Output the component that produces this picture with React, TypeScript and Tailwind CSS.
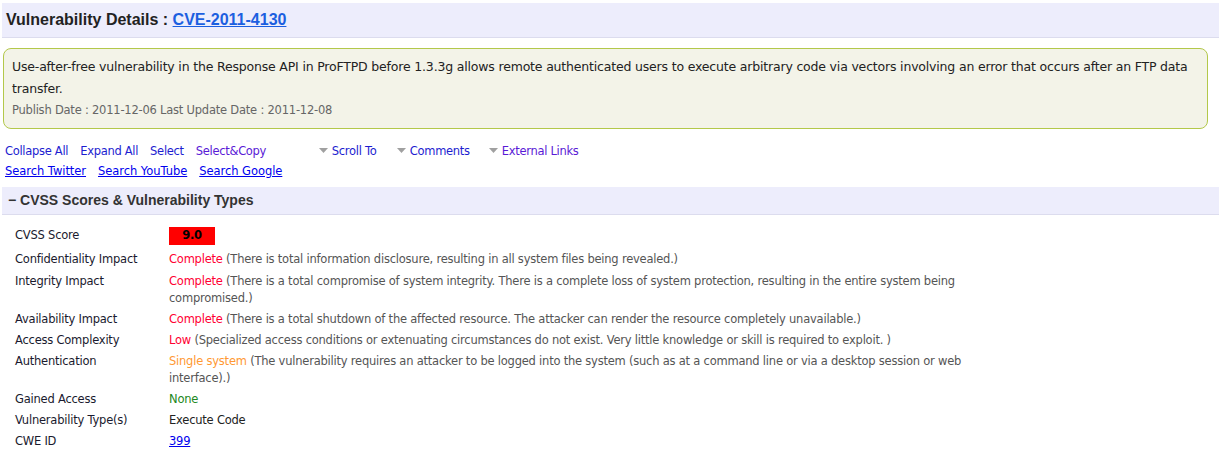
import React from 'react';

const rows: { label: string; value: React.ReactNode; gap?: string }[] = [
  {
    label: 'Confidentiality Impact',
    gap: 'pb-[5px]',
    value: (
      <>
        <span className="text-[#ff0033]">Complete</span> (There is total information disclosure, resulting in all system files being revealed.)
      </>
    ),
  },
  {
    label: 'Integrity Impact',
    value: (
      <>
        <span className="text-[#ff0033]">Complete</span> (There is a total compromise of system integrity. There is a complete loss of system protection, resulting in the entire system being
        <br />
        compromised.)
      </>
    ),
  },
  {
    label: 'Availability Impact',
    value: (
      <>
        <span className="text-[#ff0033]">Complete</span> (There is a total shutdown of the affected resource. The attacker can render the resource completely unavailable.)
      </>
    ),
  },
  {
    label: 'Access Complexity',
    value: (
      <>
        <span className="text-[#ff0033]">Low</span> (Specialized access conditions or extenuating circumstances do not exist. Very little knowledge or skill is required to exploit. )
      </>
    ),
  },
  {
    label: 'Authentication',
    value: (
      <>
        <span className="text-[#ff9933]">Single system</span> (The vulnerability requires an attacker to be logged into the system (such as at a command line or via a desktop session or web
        <br />
        interface).)
      </>
    ),
  },
  {
    label: 'Gained Access',
    value: <span className="text-[#228822]">None</span>,
  },
  {
    label: 'Vulnerability Type(s)',
    value: <span className="text-[#222]">Execute Code</span>,
  },
  {
    label: 'CWE ID',
    value: <a href="#" className="text-[#0000ee] underline">399</a>,
  },
];

const Caret = () => (
  <svg width="9" height="6" viewBox="0 0 9 6" className="mr-[4px] inline-block">
    <path d="M0 0 H9 L4.5 5 Z" fill="#a0a0a0" />
  </svg>
);

export default function App() {
  return (
    <div className="min-h-[454px] bg-white pt-[3px] font-['DejaVu_Sans',sans-serif] text-[11.5px] tracking-[-0.22px] text-[#222]">
      <div className="mx-[2px] flex h-[35px] items-center border-b border-[#dcdcee] bg-[#ededfc] pl-[4px]">
        <h1 className="font-['Liberation_Sans',Arial,sans-serif] text-[16px] font-bold tracking-normal text-[#222]">
          Vulnerability Details :{' '}
          <a href="#" className="text-[#1c5fe0] underline">CVE-2011-4130</a>
        </h1>
      </div>

      <div className="ml-[3px] mr-[13px] mt-[10px] h-[81px] rounded-[8px] border border-[#b3c84a] bg-[#f3f3e8] px-[8px] pt-[7px]">
        <p className="whitespace-nowrap text-[12.5px] leading-[22px] tracking-[-0.18px] text-[#222]">
          Use-after-free vulnerability in the Response API in ProFTPD before 1.3.3g allows remote authenticated users to execute arbitrary code via vectors involving an error that occurs after an FTP data
          <br />
          transfer.
        </p>
        <p className="mt-[2px] text-[11.5px] text-[#666]">Publish Date : 2011-12-06 Last Update Date : 2011-12-08</p>
      </div>

      <div className="mt-[12px] flex items-center pl-[5px] leading-[20px] tracking-[-0.3px] text-[#1d1dd0]">
        <a href="#" className="mr-[12px]">Collapse All</a>
        <a href="#" className="mr-[12px]">Expand All</a>
        <a href="#" className="mr-[12px]">Select</a>
        <a href="#" className="w-[123px] text-[#5a1ad6]">Select&amp;Copy</a>
        <span className="flex w-[78px] items-center"><Caret />Scroll To</span>
        <span className="flex w-[92px] items-center"><Caret />Comments</span>
        <span className="flex items-center text-[#5a1ad6]"><Caret />External Links</span>
      </div>
      <div className="flex items-center pl-[5px] leading-[20px] tracking-[-0.05px] text-[#0000ee]">
        <a href="#" className="mr-[12px] underline">Search Twitter</a>
        <a href="#" className="mr-[12px] underline">Search YouTube</a>
        <a href="#" className="underline">Search Google</a>
      </div>

      <div className="mx-[2px] mt-[6px] flex h-[28px] items-center border-b border-[#dcdcee] bg-[#ededfc] pl-[6px] font-['Liberation_Sans',Arial,sans-serif] text-[14px] font-bold tracking-normal text-[#333]">
        − CVSS Scores &amp; Vulnerability Types
      </div>

      <div className="pl-[15px] pt-[12px]">
        <div className="flex h-[24px] items-start">
          <div className="w-[154px] text-[#1a1a2e]">CVSS Score</div>
          <div className="flex h-[18px] w-[46px] items-center justify-center bg-[#ff0000] font-bold text-black">9.0</div>
        </div>
        {rows.map((r) => (
          <div key={r.label} className={`flex leading-[17px] ${r.gap ?? 'pb-[4px]'}`}>
            <div className="w-[154px] shrink-0 text-[#1a1a2e]">{r.label}</div>
            <div className="whitespace-nowrap text-[#555]">{r.value}</div>
          </div>
        ))}
      </div>
    </div>
  );
}
